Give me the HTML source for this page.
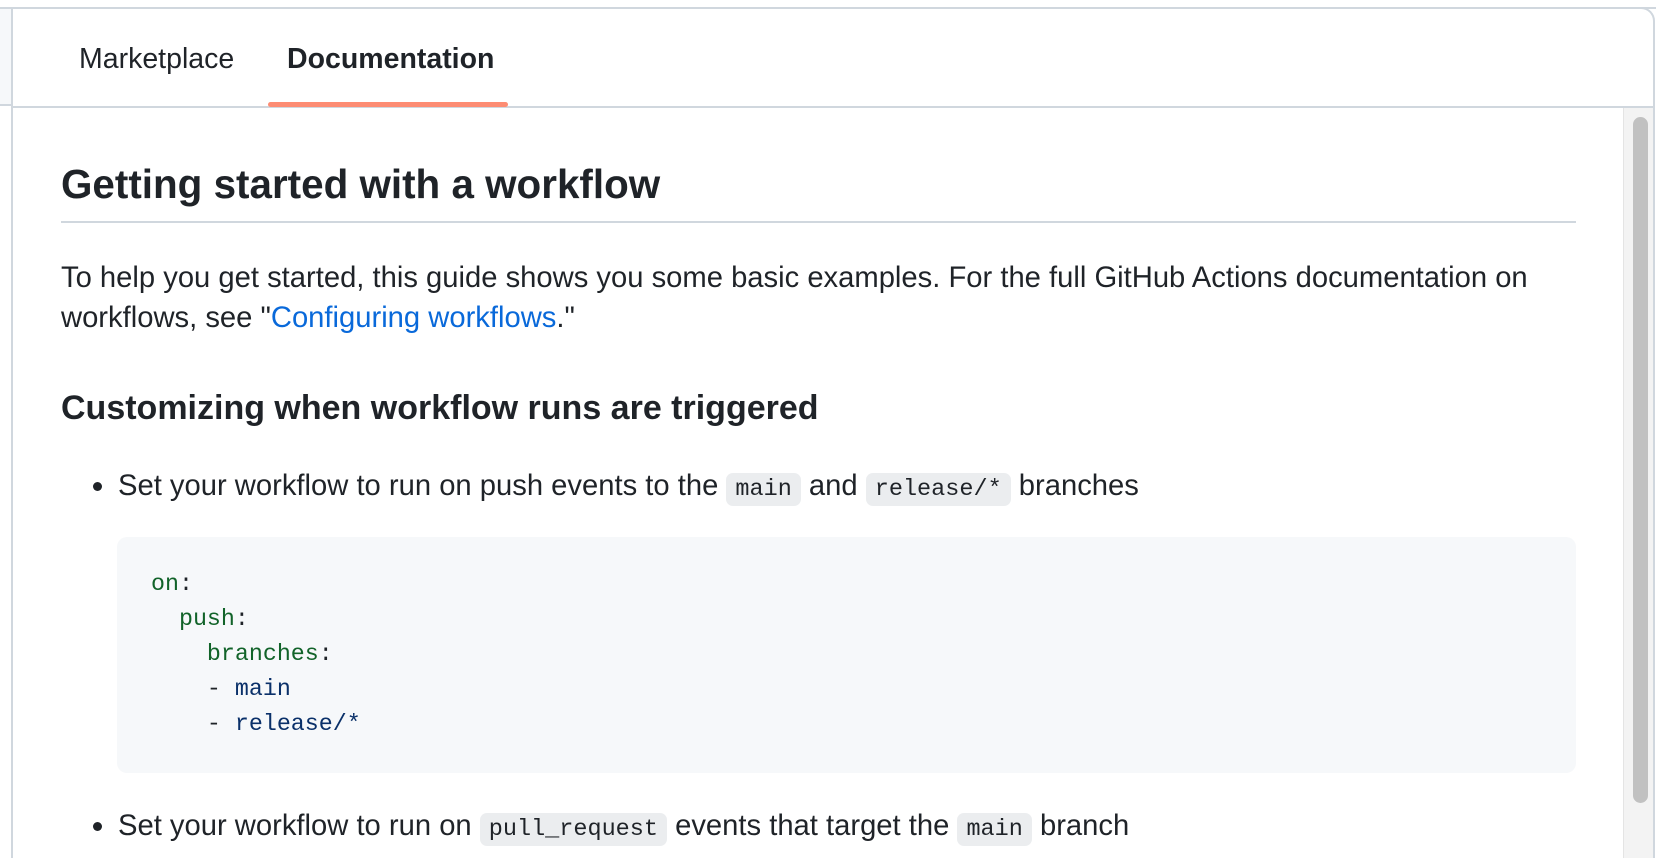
<!DOCTYPE html>
<html><head><meta charset="utf-8"><style>
*{margin:0;padding:0;box-sizing:border-box}
html,body{width:1656px;height:858px;overflow:hidden;background:#fff;font-family:"Liberation Sans",Arial,sans-serif;color:#1f2328}
.topline{position:absolute;left:0;top:7px;width:1656px;height:2px;background:#d0d7de}
.leftstrip{position:absolute;left:0;top:9px;width:11px;height:97px;background:#f6f8fa;border-bottom:2px solid #d0d7de}
.panel{position:absolute;left:11px;top:7px;width:1644px;height:851px;border:2px solid #d0d7de;border-bottom:0;border-top-right-radius:14px;background:#fff}
.tabs{position:absolute;left:0;top:0;width:100%;height:99px;border-bottom:2px solid #d0d7de}
.tab{position:absolute;top:33px;font-size:28.5px;line-height:34px}
.ul{position:absolute;left:255px;top:93px;width:240px;height:5px;border-radius:3px;background:#fd8c73}
.sb{position:absolute;left:1623px;top:108px;width:30px;height:750px;background:#f3f3f3;border-left:1px solid #e4e4e4}
.thumb{position:absolute;left:1633px;top:117px;width:15px;height:686px;border-radius:8px;background:#c1c1c1}
.a{position:absolute;white-space:nowrap}
.p{font-size:29.2px;line-height:41px}
code{font-family:"Liberation Mono","DejaVu Sans Mono",monospace;font-size:23.5px;background:rgba(175,184,193,.25);border-radius:7px;padding:3px 9px}
.pre{position:absolute;left:117px;top:537px;width:1459px;height:236px;background:#f6f8fa;border-radius:10px}
.pre pre{position:absolute;left:34px;top:30px;font-family:"Liberation Mono","DejaVu Sans Mono",monospace;font-size:23.3px;line-height:35px;color:#1f2328}
.k{color:#116329}.v{color:#0a3069}
.dot{position:absolute;width:9px;height:9px;border-radius:50%;background:#1f2328}
</style></head><body>
<div class="topline"></div>
<div class="leftstrip"></div>
<div class="panel">
 <div class="tabs">
  <div class="tab" style="left:66px">Marketplace</div>
  <div class="tab" style="left:274px;font-weight:bold">Documentation</div>
  <div class="ul"></div>
 </div>
</div>
<div class="sb"></div><div class="thumb"></div>

<div class="a" style="left:61px;top:160px;font-size:40.4px;font-weight:bold;line-height:48px">Getting started with a workflow</div>
<div class="a" style="left:61px;top:221px;width:1515px;height:2px;background:#d0d7de"></div>
<div class="a p" style="left:61px;top:258px">To help you get started, this guide shows you some basic examples. For the full GitHub Actions documentation on</div>
<div class="a p" style="left:61px;top:298px">workflows, see "<span style="color:#0969da">Configuring workflows</span>."</div>
<div class="a" style="left:61px;top:387px;font-size:34px;font-weight:bold;line-height:42px">Customizing when workflow runs are triggered</div>

<div class="dot" style="left:93px;top:482px"></div>
<div class="a p" style="left:118px;top:466px">Set your workflow to run on push events to the <code>main</code> and <code>release/*</code> branches</div>
<div class="pre"><pre><span class="k">on</span>:
  <span class="k">push</span>:
    <span class="k">branches</span>:
    - <span class="v">main</span>
    - <span class="v">release/*</span></pre></div>
<div class="dot" style="left:93px;top:822px"></div>
<div class="a p" style="left:118px;top:806px">Set your workflow to run on <code>pull_request</code> events that target the <code>main</code> branch</div>
</body></html>
